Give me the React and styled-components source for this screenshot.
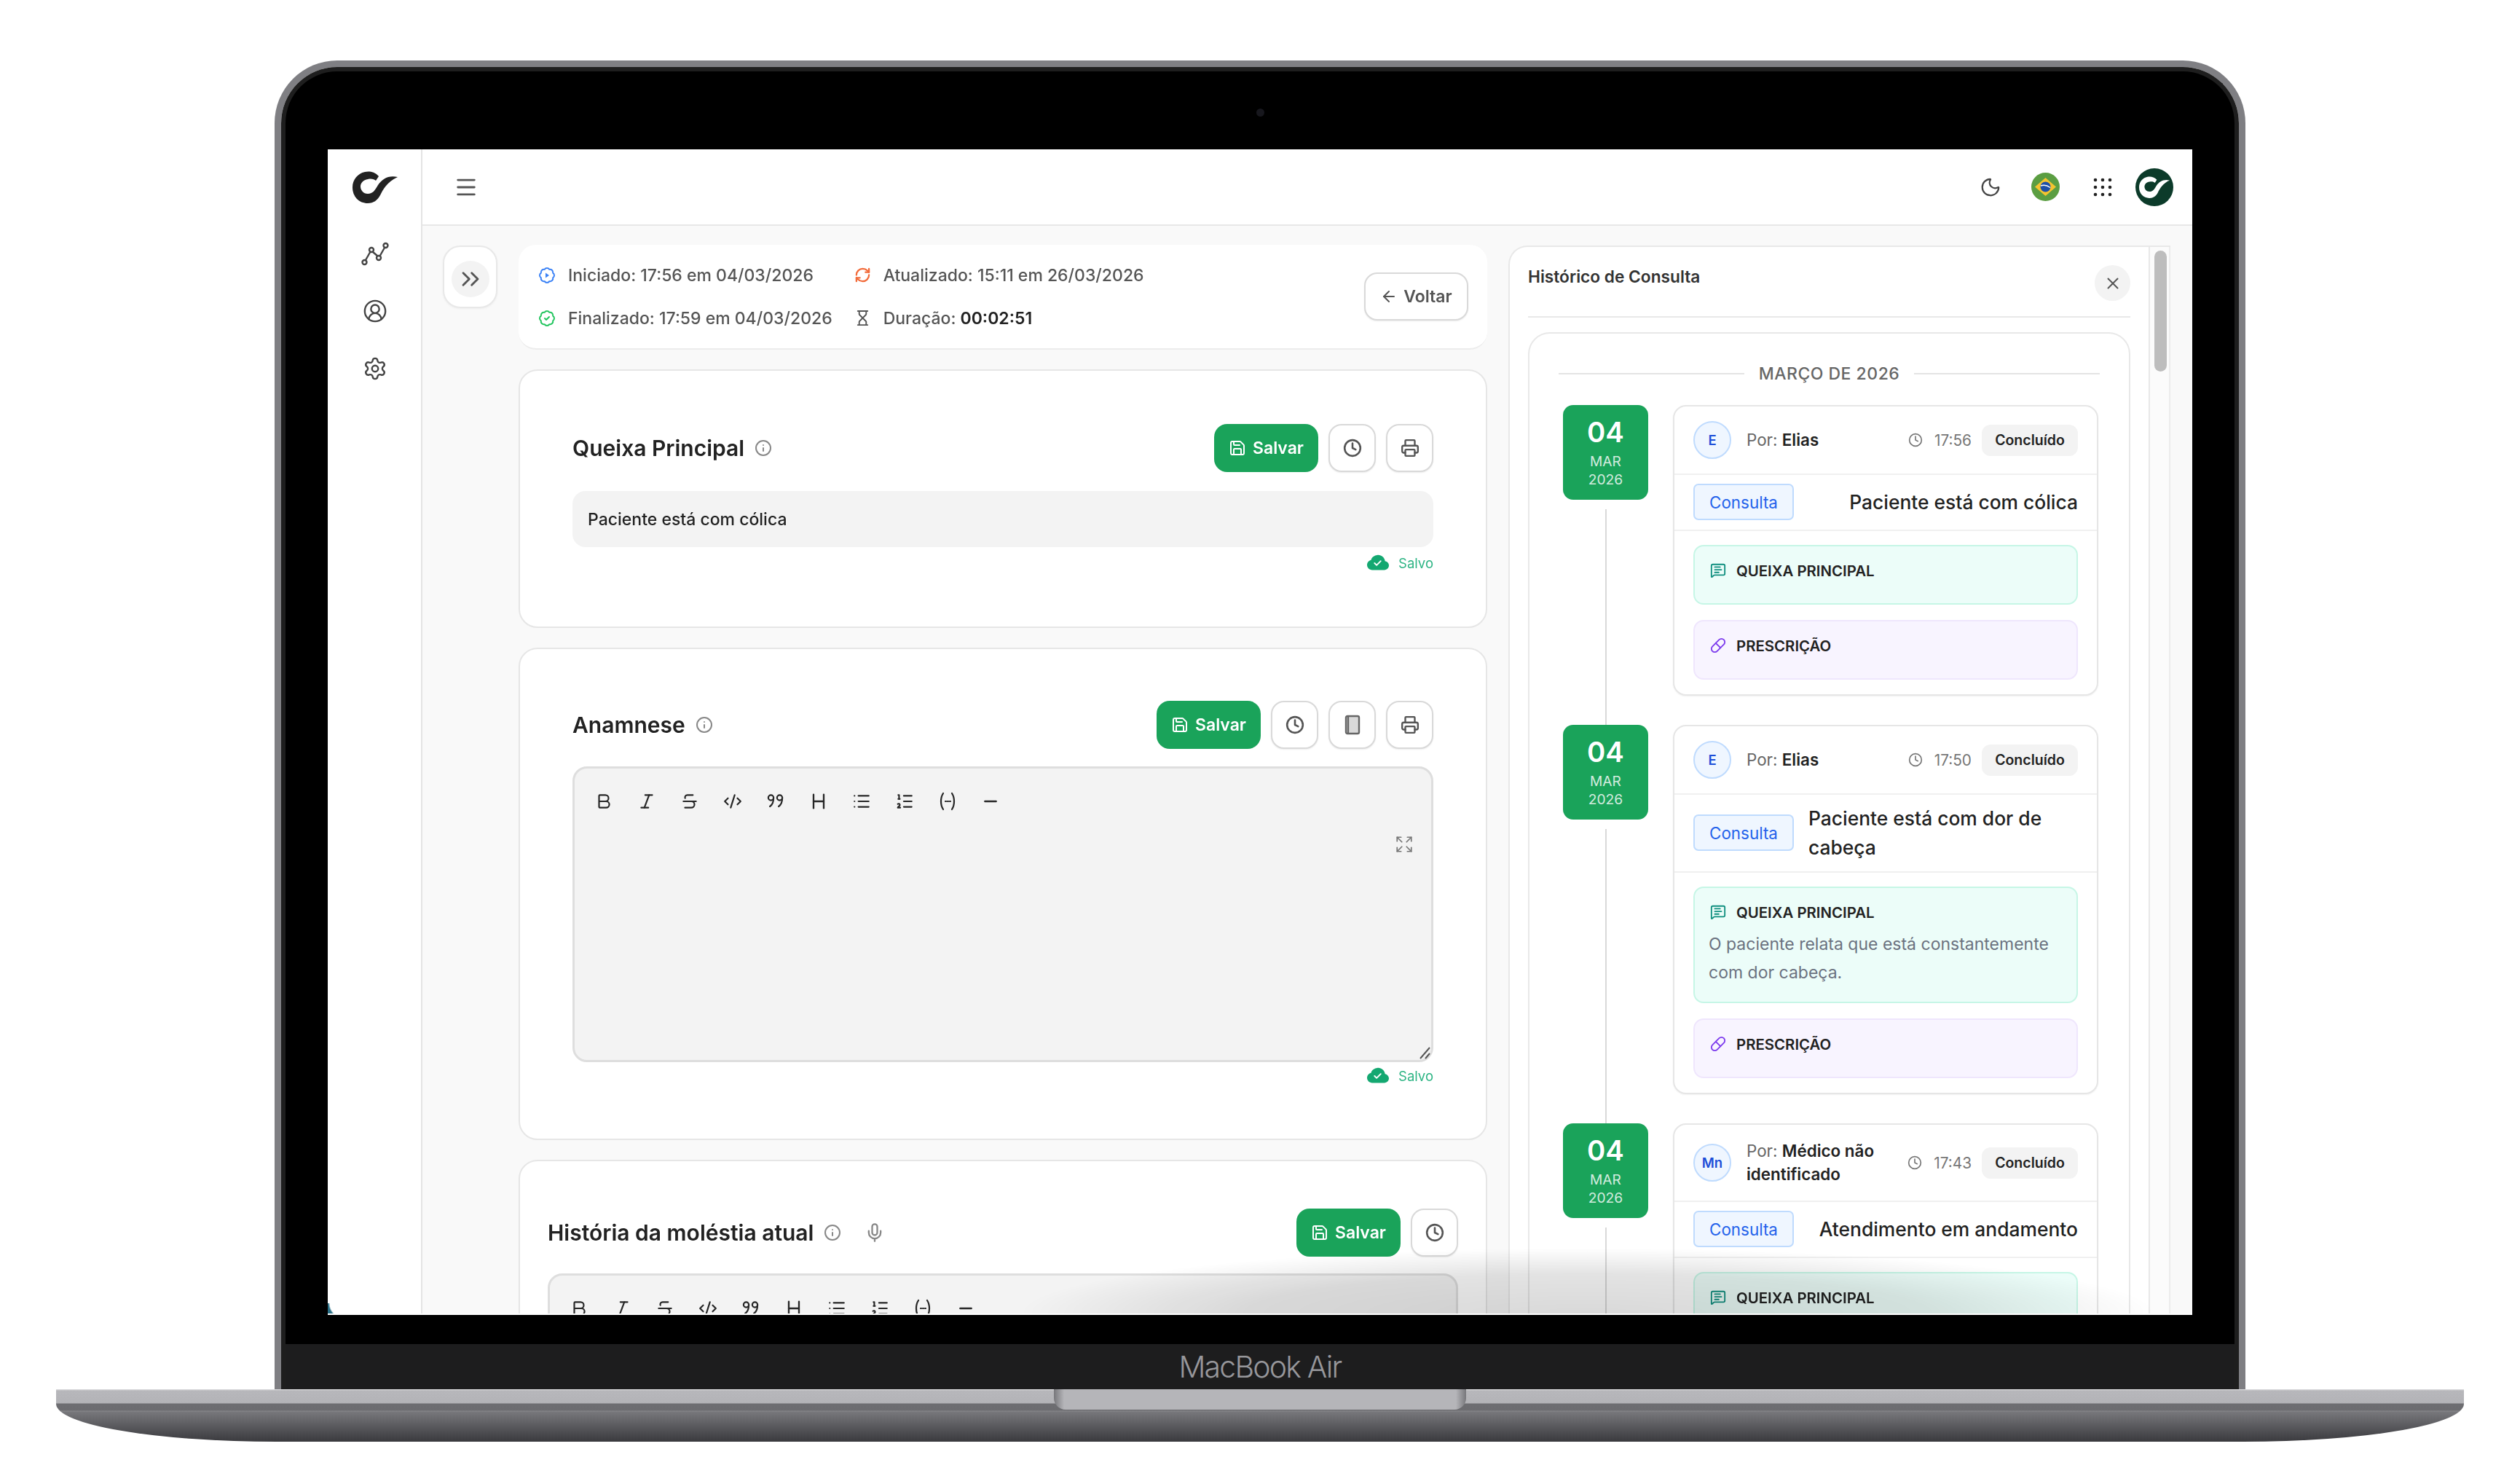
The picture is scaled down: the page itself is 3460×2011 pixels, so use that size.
import React from "react"
import styled, { createGlobalStyle } from "styled-components"
import {
  ArrowLeft, BadgeCheck, Bold, ChevronsRight, CircleUserRound, Clock, CodeXml, Expand,
  Heading, Hourglass, Info, Italic, List, ListOrdered, Menu, MessageSquareText, Mic, Minus, Moon, Pill,
  Printer, RefreshCw, Save, Settings, Strikethrough, X,
} from "lucide-react"
import { BsCloudCheckFill } from "react-icons/bs"

const GlobalStyle = createGlobalStyle`
  html, body { margin: 0; background: #fff; overflow: hidden; height: 2011px; }
  * { box-sizing: border-box; }
  body { font-family: Inter, "Liberation Sans", sans-serif; color: #1f1f1f; }
`

const GREEN = "#1aa35a"

const Stage = styled.div`
  width: 3460px;
  padding-top: 83px;
  display: flex;
  flex-direction: column;
  align-items: center;
`

const Lid = styled.div`
  width: 2706px;
  height: 1824px;
  border: 9px solid #7f7f83;
  border-bottom: 0;
  border-radius: 86px 86px 0 0;
`

const Frame = styled.div`
  height: 100%;
  border: 6px solid #1e1e1e;
  border-bottom: 0;
  border-radius: 77px 77px 0 0;
  background: #000;
  display: flex;
  flex-direction: column;
`

const CameraBar = styled.div`
  height: 107px;
  flex: none;
  padding-top: 5px;
  display: flex;
  align-items: center;
  justify-content: center;
`

const Camera = styled.div`
  width: 11px;
  height: 11px;
  border-radius: 50%;
  background: #17171d;
`

const ScreenWrap = styled.div`
  flex: none;
  padding: 0 58px;
`

const Screen = styled.div`
  position: relative;
  width: 2560px;
  height: 1600px;
  overflow: hidden;
  background: #f9f9f9;
  border-bottom: 2px solid #fff;
  display: flex;
`

const Soft = styled.div`
  flex: 1;
  min-width: 0;
  display: flex;
  filter: blur(0.7px);
`

const BottomShade = styled.div`
  position: absolute;
  right: 50px;
  bottom: 0;
  width: 1560px;
  height: 90px;
  background: radial-gradient(
    ellipse 50% 100% at 50% 100%,
    rgba(0, 0, 0, 0.15) 0, rgba(0, 0, 0, 0.11) 60%, rgba(0, 0, 0, 0) 100%
  );
`

const CornerSliver = styled.div`
  position: absolute;
  left: 0;
  bottom: 0;
  width: 22px;
  height: 14px;
  background: radial-gradient(circle at 100% 0, rgba(42, 111, 134, 0) 19px, #2a6f86 21px);
`

const Chin = styled.div`
  margin-top: 40px;
  flex: 1;
  background: #1d1d1e;
  display: flex;
  align-items: center;
  justify-content: center;
`

const ChinLabel = styled.div`
  font-family: Inter, "Liberation Sans", sans-serif;
  font-size: 41px;
  font-weight: 300;
  letter-spacing: -1.8px;
  color: #97979b;
`

const Base = styled.div`
  width: 3306px;
  height: 72px;
  border-radius: 0 0 303px 303px / 0 0 52px 52px;
  background: linear-gradient(
    #e4e4e6 0, #b7b7bb 2px, #b3b3b7 19px, #6d6d71 20px, #6c6c70 29px, #8a8a8e 30px, #77777b 31px, #3a3a3e 100%
  );
  display: flex;
  justify-content: center;
`

const Hinge = styled.div`
  width: 566px;
  height: 28px;
  border-radius: 0 0 16px 16px;
  background: linear-gradient(90deg, #77777b 0, #b5b5b9 14px, #b5b5b9 calc(100% - 14px), #77777b 100%);
`

const Sidebar = styled.aside`
  width: 130px;
  flex: none;
  background: #fff;
  border-right: 2px solid #e4e4e4;
  display: flex;
  flex-direction: column;
  align-items: center;
  padding: 30px 0 0 2px;
`

const LogoMark = styled.svg`
  width: ${p => p.$w}px;
  height: ${p => Math.round((p.$w * 44) / 62)}px;
  fill: ${p => p.$fill};
  flex: none;
`

const NavList = styled.nav`
  margin-top: 53px;
  display: flex;
  flex-direction: column;
  align-items: center;
  gap: 45px;
  color: #444;
`

const Main = styled.div`
  flex: 1;
  min-width: 0;
  display: flex;
  flex-direction: column;
`

const TopBar = styled.header`
  height: 105px;
  flex: none;
  background: #fff;
  border-bottom: 2px solid #e8e8e8;
  padding: 0 26px 0 43px;
  display: flex;
  align-items: center;
  color: #555;
`

const TopRight = styled.div`
  margin-left: auto;
  display: flex;
  align-items: center;
`

const TopItem = styled.div`
  display: flex;
  margin-left: ${p => p.$gap}px;
  color: ${p => p.$color || "#444"};
`

const AvatarLogo = styled.div`
  width: 52px;
  height: 52px;
  border-radius: 50%;
  background: #0c3b2a;
  display: flex;
  align-items: center;
  justify-content: center;
`

const Content = styled.div`
  flex: 1;
  min-height: 0;
  overflow: hidden;
  padding: 26px 30px 0 28px;
  display: flex;
  align-items: flex-start;
`

const ToggleCard = styled.div`
  width: 75px;
  height: 86px;
  flex: none;
  margin-top: 1px;
  margin-right: 29px;
  padding-top: 5px;
  background: #fff;
  border: 2px solid #e8e8e8;
  border-radius: 24px;
  box-shadow: 0 1px 3px rgba(0, 0, 0, 0.05);
  display: flex;
  align-items: center;
  justify-content: center;
`

const ToggleInner = styled.div`
  width: 52px;
  height: 50px;
  border-radius: 50%;
  background: #f3f3f3;
  color: #555;
  display: flex;
  align-items: center;
  justify-content: center;
`

const FormColumn = styled.div`
  width: 1330px;
  flex: none;
  display: flex;
  flex-direction: column;
  gap: 27px;
`

const InfoCard = styled.div`
  height: 144px;
  background: #fff;
  border-radius: 24px;
  border-bottom: 2px solid #ececec;
  padding: 0 26px 0 27px;
  display: flex;
  align-items: center;
  justify-content: space-between;
`

const InfoGrid = styled.div`
  display: grid;
  grid-template-columns: auto auto;
  column-gap: 30px;
  row-gap: 29px;
`

const InfoItem = styled.div`
  height: 30px;
  display: flex;
  align-items: center;
  gap: 17px;
  font-size: 23px;
  font-weight: 500;
  color: #555;
  white-space: nowrap;

  b { font-weight: 600; color: #222; }
`

const Outline = styled.button`
  height: 66px;
  width: ${p => p.$w || 65}px;
  background: #fff;
  border: 2px solid #d9d9d9;
  border-radius: 18px;
  box-shadow: 0 1px 2px rgba(0, 0, 0, 0.08);
  color: #555;
  padding: 0;
  display: flex;
  align-items: center;
  justify-content: center;
  gap: 8px;
  font: 600 23px Inter, sans-serif;
`

const SectionCard = styled.section`
  background: #fff;
  border: 2px solid #e6e6e6;
  border-radius: 26px;
  padding: ${p => p.$pad};
`

const SectionHead = styled.div`
  display: flex;
  align-items: center;
  justify-content: space-between;
  margin-bottom: ${p => p.$mb}px;
`

const SectionTitle = styled.h2`
  margin: 0;
  display: flex;
  align-items: center;
  gap: 14px;
  font-size: 30px;
  font-weight: 600;
  color: #222;
`

const TitleIcon = styled.span`
  display: flex;
  color: #888;
  margin-left: ${p => p.$ml || 0}px;
`

const Actions = styled.div`
  display: flex;
  gap: 14px;
`

const SaveButton = styled.button`
  height: 66px;
  padding: 0 20px;
  background: ${GREEN};
  border: 0;
  border-radius: 18px;
  color: #fff;
  display: flex;
  align-items: center;
  gap: 9px;
  font: 600 23px Inter, sans-serif;
`

const PlainInput = styled.div`
  height: 77px;
  background: #f3f3f3;
  border-radius: 18px;
  padding: 0 21px;
  display: flex;
  align-items: center;
  font-size: 23px;
  font-weight: 500;
  color: #222;
`

const Saved = styled.div`
  margin-top: ${p => p.$mt}px;
  height: 26px;
  display: flex;
  align-items: center;
  justify-content: flex-end;
  gap: 13px;
  font-size: 18.5px;
  color: #2fb585;

  svg { color: #14a871; }
`

const Editor = styled.div`
  position: relative;
  height: 406px;
  background: #f3f3f3;
  border: 3px solid #dedede;
  border-radius: 20px;
  padding: 31px 24px 0 26px;
  display: flex;
  flex-direction: column;
`

const Toolbar = styled.div`
  display: flex;
  gap: 31px;
  color: #262626;
`

const ToolIcon = styled.span`
  width: 28px;
  height: 28px;
  display: flex;
  align-items: center;
  justify-content: center;
`

const FullIcon = styled.span`
  margin-top: 32px;
  align-self: flex-end;
  display: flex;
  color: #777;
`

const Grabber = styled.svg`
  position: absolute;
  right: 1px;
  bottom: 1px;
  width: 16px;
  height: 18px;
  stroke: #555;
  stroke-width: 2;
`

const HistoryPanel = styled.div`
  width: 909px;
  flex: none;
  height: 1600px;
  margin-left: 29px;
  margin-top: 1px;
  display: flex;
  background: #fff;
  border-top: 2px solid #e8e8e8;
  border-left: 2px solid #e8e8e8;
  border-radius: 26px 0 0 0;
`

const PanelBody = styled.div`
  width: 877px;
  flex: none;
  padding: 25px 25px 0 25px;
`

const PanelHead = styled.div`
  display: flex;
  align-items: flex-start;
  justify-content: space-between;
  padding-bottom: 21px;
  margin-bottom: 20px;
  border-bottom: 2px solid #e8e8e8;
`

const PanelTitle = styled.div`
  font-size: 22.7px;
  font-weight: 600;
  line-height: 32px;
  color: #333;
`

const CloseButton = styled.div`
  width: 49px;
  height: 49px;
  border-radius: 50%;
  background: #f3f3f3;
  color: #555;
  display: flex;
  align-items: center;
  justify-content: center;
`

const Gutter = styled.div`
  flex: 1;
  background: #fbfbfb;
  border-left: 2px solid #e8e8e8;
  border-right: 2px solid #ececec;
  padding: 5px 3px 0 6px;
`

const ScrollThumb = styled.div`
  height: 166px;
  border-radius: 9px;
  background: #bdbdbd;
`

const TimelineCard = styled.div`
  background: #fff;
  border: 2px solid #e8e8e8;
  border-radius: 30px;
  padding: 40px 40px 0;
`

const MonthHeading = styled.div`
  height: 30px;
  display: flex;
  align-items: center;
  gap: 20px;
  font-size: 23px;
  font-weight: 500;
  letter-spacing: 0.5px;
  color: #666;
  white-space: nowrap;
  margin-bottom: 28px;

  &::before, &::after {
    content: "";
    flex: 1;
    height: 2px;
    background: #e4e4e4;
  }
`

const TimelineList = styled.div`
  padding-left: 6px;
  display: flex;
  flex-direction: column;
  gap: 40px;
`

const TimelineRow = styled.div`
  display: flex;
  gap: 34px;
`

const DateColumn = styled.div`
  width: 117px;
  flex: none;
  display: flex;
  flex-direction: column;
  align-items: center;
`

const DateBadge = styled.div`
  width: 117px;
  height: 130px;
  flex: none;
  border-radius: 14px;
  background: ${GREEN};
  color: #fff;
  display: flex;
  flex-direction: column;
  align-items: center;
  justify-content: center;
`

const DateDay = styled.div`
  font-size: 38.4px;
  font-weight: 600;
  line-height: 44px;
  margin-bottom: 6px;
`

const DateSmall = styled.div`
  font-size: 19.2px;
  line-height: 25px;
  opacity: 0.8;
`

const Connector = styled.div`
  flex: 1;
  width: 2px;
  margin: 13px 0 -40px;
  background: #d9d9d9;
`

const EntryCard = styled.article`
  width: 584px;
  flex: none;
  background: #fff;
  border: 2px solid #e6e6e6;
  border-radius: 18px;
  box-shadow: 0 1px 2px rgba(0, 0, 0, 0.06);
`

const EntryHead = styled.div`
  padding: 20px 26px;
  border-bottom: 2px solid #f0f0f0;
  display: flex;
  align-items: center;
`

const Avatar = styled.div`
  width: 52px;
  height: 52px;
  flex: none;
  border-radius: 50%;
  background: #eff6ff;
  border: 2px solid #bfdbfe;
  color: #1d4ed8;
  font-size: 18.5px;
  font-weight: 600;
  display: flex;
  align-items: center;
  justify-content: center;
`

const Author = styled.div`
  margin-left: 21px;
  flex: 1;
  font-size: 22.4px;
  line-height: 32px;
  color: #666;

  b { font-weight: 600; color: #222; }
`

const TimeLabel = styled.div`
  display: flex;
  align-items: center;
  gap: 16px;
  margin-left: 17px;
  font-size: 20.8px;
  color: #777;
  white-space: nowrap;
`

const StatusPill = styled.div`
  margin-left: 14px;
  width: 132px;
  height: 43px;
  flex: none;
  border-radius: 12px;
  background: #f3f3f3;
  display: flex;
  align-items: center;
  justify-content: center;
  font-size: 19.5px;
  font-weight: 600;
  color: #222;
`

const EntryType = styled.div`
  padding: 12px 26px 13px;
  border-bottom: 2px solid #f0f0f0;
  display: flex;
  align-items: center;
  justify-content: space-between;
  gap: 20px;
`

const TypeTag = styled.div`
  width: 138px;
  height: 50px;
  flex: none;
  border: 2px solid #bfdbfe;
  border-radius: 7px;
  background: #eff6ff;
  color: #2563eb;
  font-size: 22.4px;
  display: flex;
  align-items: center;
  justify-content: center;
`

const EntryTitle = styled.div`
  font-size: 26.4px;
  font-weight: 500;
  line-height: 40px;
  color: #222;
`

const EntryBody = styled.div`
  padding: 19px 26px 20px;
  display: flex;
  flex-direction: column;
  gap: 21px;
`

const NoteBox = styled.div`
  border: 2px solid ${p => p.$border};
  background: ${p => p.$bg};
  border-radius: 14px;
  padding: 18px 19px 20px;
`

const NoteLabel = styled.div`
  height: 30px;
  margin-bottom: 10px;
  display: flex;
  align-items: center;
  gap: 14px;
  padding-left: 2px;
  font-size: 20.4px;
  font-weight: 600;
  color: #222;

  svg { color: ${p => p.$icon}; }
`

const NoteText = styled.div`
  font-size: 23px;
  line-height: 39px;
  color: #6b7280;
`

const ChartIcon = () => (
  <svg width="38" height="33" viewBox="0 0 38 33" fill="none" stroke="currentColor" strokeWidth="2.4">
    <circle cx="4.5" cy="28" r="3" />
    <circle cx="14" cy="11" r="3" />
    <circle cx="24" cy="22" r="3" />
    <circle cx="33.5" cy="5" r="3" />
    <path d="M6 25l6.5-11.5M15.5 13.5l7 6M25.5 19.5l6.5-11.5" />
  </svg>
)

const Logo = ({ w, fill }) => (
  <LogoMark $w={w} $fill={fill} viewBox="0 0 62 44">
    <path d="M36 7C30 0 22 0 17 1 7 3 0 12 0 22c0 13 9 22 21 22 8 0 13-4 17-11 4-8 9-18 24-25-12-3-21 2-27 11-4 7-7 12-14 12-6 0-10-5-10-10s4-9 10-10c5-1 9 0 11 2Z" />
  </LogoMark>
)

const Flag = () => (
  <svg width="39" height="39" viewBox="0 0 39 39">
    <circle cx="19.5" cy="19.5" r="19.5" fill="#5b9e42" />
    <path d="M19.5 7L34 19.5 19.5 32 5 19.5Z" fill="#f4c430" />
    <circle cx="19.5" cy="19.5" r="7" fill="#1d4fa8" />
    <path d="M13 18c4-1.5 9-.5 13 2.5" fill="none" stroke="#fff" strokeWidth="1.5" />
  </svg>
)

const DotGrid = () => (
  <svg width="26" height="26" viewBox="0 0 26 26" fill="currentColor">
    {[3, 13, 23].flatMap(y => [3, 13, 23].map(x => <circle key={`${x}-${y}`} cx={x} cy={y} r="2.3" />))}
  </svg>
)

const StartIcon = () => (
  <svg width="24" height="24" viewBox="0 0 24 24" fill="none" stroke="#3b82f6" strokeWidth="2">
    <path d="M3.85 8.62a4 4 0 0 1 4.78-4.77 4 4 0 0 1 6.74 0 4 4 0 0 1 4.78 4.78 4 4 0 0 1 0 6.74 4 4 0 0 1-4.77 4.78 4 4 0 0 1-6.75 0 4 4 0 0 1-4.78-4.77 4 4 0 0 1 0-6.76Z" />
    <path d="M10 8.5l5 3.5-5 3.5Z" fill="#3b82f6" stroke="none" />
  </svg>
)

const BookIcon = () => (
  <svg width="24" height="28" viewBox="0 0 24 28" fill="none">
    <rect x="3" y="2" width="18" height="24" rx="2" fill="#d9d9d9" stroke="#666" strokeWidth="2.4" />
    <path d="M6 2v24" stroke="#666" strokeWidth="2.4" />
  </svg>
)

const QuoteIcon = () => (
  <svg width="28" height="28" viewBox="0 0 28 28" fill="none" stroke="currentColor" strokeWidth="2.2" strokeLinecap="round">
    <circle cx="7.5" cy="9" r="3.6" />
    <path d="M11.1 9c0 6-2 10-5 12" />
    <circle cx="19.5" cy="9" r="3.6" />
    <path d="M23.1 9c0 6-2 10-5 12" />
  </svg>
)

const VariableIcon = () => (
  <svg width="28" height="28" viewBox="0 0 28 28" fill="none" stroke="currentColor" strokeWidth="2.2" strokeLinecap="round">
    <path d="M8 3c-4 6-4 16 0 22M20 3c4 6 4 16 0 22" />
    <path d="M11 14h1M14 14h1M17 14h1" />
  </svg>
)

const EditorTools = () => (
  <Toolbar>
    <ToolIcon><Bold size={26} strokeWidth={2} /></ToolIcon>
    <ToolIcon><Italic size={26} strokeWidth={2} /></ToolIcon>
    <ToolIcon><Strikethrough size={26} strokeWidth={2} /></ToolIcon>
    <ToolIcon><CodeXml size={26} strokeWidth={2} /></ToolIcon>
    <ToolIcon><QuoteIcon /></ToolIcon>
    <ToolIcon><Heading size={30} strokeWidth={2} /></ToolIcon>
    <ToolIcon><List size={26} strokeWidth={2} /></ToolIcon>
    <ToolIcon><ListOrdered size={26} strokeWidth={2} /></ToolIcon>
    <ToolIcon><VariableIcon /></ToolIcon>
    <ToolIcon><Minus size={26} strokeWidth={2.4} /></ToolIcon>
  </Toolbar>
)

const SectionEditor = () => (
  <Editor>
    <EditorTools />
    <FullIcon><Expand size={26} strokeWidth={1.6} /></FullIcon>
    <Grabber viewBox="0 0 16 18"><path d="M2 17L15 2M9 17l6-7" /></Grabber>
  </Editor>
)

const SaveBtn = () => (
  <SaveButton><Save size={24} strokeWidth={2} />Salvar</SaveButton>
)

const SavedNote = ({ mt }) => (
  <Saved $mt={mt}><BsCloudCheckFill size={30} />Salvo</Saved>
)

const ClockBtn = () => (
  <Outline><Clock size={26} strokeWidth={2.4} /></Outline>
)

const PrintBtn = () => (
  <Outline><Printer size={26} strokeWidth={2.2} /></Outline>
)

const ENTRIES = [
  {
    initials: "E", author: "Elias", time: "17:56", title: "Paciente está com cólica",
    note: null,
  },
  {
    initials: "E", author: "Elias", time: "17:50", title: "Paciente está com dor de cabeça",
    note: "O paciente relata que está constantemente com dor cabeça.",
  },
  {
    initials: "Mn", author: "Médico não identificado", time: "17:43", title: "Atendimento em andamento",
    note: null,
  },
]

const Entry = ({ entry }) => (
  <TimelineRow>
    <DateColumn>
      <DateBadge>
        <DateDay>04</DateDay>
        <DateSmall>MAR</DateSmall>
        <DateSmall>2026</DateSmall>
      </DateBadge>
      <Connector />
    </DateColumn>
    <EntryCard>
      <EntryHead>
        <Avatar>{entry.initials}</Avatar>
        <Author>Por: <b>{entry.author}</b></Author>
        <TimeLabel><Clock size={20} strokeWidth={2} />{entry.time}</TimeLabel>
        <StatusPill>Concluído</StatusPill>
      </EntryHead>
      <EntryType>
        <TypeTag>Consulta</TypeTag>
        <EntryTitle>{entry.title}</EntryTitle>
      </EntryType>
      <EntryBody>
        <NoteBox $bg="#ecfdf9" $border="#c6f6e6">
          <NoteLabel $icon="#0f8f7f"><MessageSquareText size={22} strokeWidth={2} />QUEIXA PRINCIPAL</NoteLabel>
          {entry.note && <NoteText>{entry.note}</NoteText>}
        </NoteBox>
        <NoteBox $bg="#f8f4ff" $border="#efe6fd">
          <NoteLabel $icon="#7c3aed"><Pill size={22} strokeWidth={2} />PRESCRIÇÃO</NoteLabel>
        </NoteBox>
      </EntryBody>
    </EntryCard>
  </TimelineRow>
)

const App = () => (
  <>
    <GlobalStyle />
    <Stage>
      <Lid>
        <Frame>
          <CameraBar><Camera /></CameraBar>
          <ScreenWrap>
            <Screen>
              <Soft>
                <Sidebar>
                  <Logo w={62} fill="#222" />
                  <NavList>
                    <ChartIcon />
                    <CircleUserRound size={34} strokeWidth={1.7} />
                    <Settings size={34} strokeWidth={1.7} />
                  </NavList>
                </Sidebar>
                <Main>
                  <TopBar>
                    <Menu size={34} strokeWidth={2} />
                    <TopRight>
                      <TopItem $gap={0}><Moon size={30} strokeWidth={1.8} /></TopItem>
                      <TopItem $gap={41}><Flag /></TopItem>
                      <TopItem $gap={46} $color="#222"><DotGrid /></TopItem>
                      <TopItem $gap={32}>
                        <AvatarLogo><Logo w={42} fill="#fff" /></AvatarLogo>
                      </TopItem>
                    </TopRight>
                  </TopBar>
                  <Content>
                    <ToggleCard>
                      <ToggleInner><ChevronsRight size={40} strokeWidth={1.7} /></ToggleInner>
                    </ToggleCard>
                    <FormColumn>
                      <InfoCard>
                        <InfoGrid>
                          <InfoItem><StartIcon />Iniciado: 17:56 em 04/03/2026</InfoItem>
                          <InfoItem><RefreshCw size={23} color="#f26b3a" strokeWidth={2.4} />Atualizado: 15:11 em 26/03/2026</InfoItem>
                          <InfoItem><BadgeCheck size={24} color="#22c55e" strokeWidth={2} />Finalizado: 17:59 em 04/03/2026</InfoItem>
                          <InfoItem><Hourglass size={23} color="#555" strokeWidth={2} /><span>Duração: <b>00:02:51</b></span></InfoItem>
                        </InfoGrid>
                        <Outline $w={143}><ArrowLeft size={24} strokeWidth={2} />Voltar</Outline>
                      </InfoCard>

                      <SectionCard $pad="73px 72px 74px">
                        <SectionHead $mb={26}>
                          <SectionTitle>Queixa Principal<TitleIcon><Info size={24} strokeWidth={2} /></TitleIcon></SectionTitle>
                          <Actions><SaveBtn /><ClockBtn /><PrintBtn /></Actions>
                        </SectionHead>
                        <PlainInput>Paciente está com cólica</PlainInput>
                        <SavedNote mt={9} />
                      </SectionCard>

                      <SectionCard $pad="71px 72px 73px">
                        <SectionHead $mb={24}>
                          <SectionTitle>Anamnese<TitleIcon><Info size={24} strokeWidth={2} /></TitleIcon></SectionTitle>
                          <Actions>
                            <SaveBtn />
                            <ClockBtn />
                            <Outline><BookIcon /></Outline>
                            <PrintBtn />
                          </Actions>
                        </SectionHead>
                        <SectionEditor />
                        <SavedNote mt={6} />
                      </SectionCard>

                      <SectionCard $pad="65px 38px 74px">
                        <SectionHead $mb={23}>
                          <SectionTitle>
                            História da moléstia atual
                            <TitleIcon><Info size={24} strokeWidth={2} /></TitleIcon>
                            <TitleIcon $ml={18}><Mic size={28} strokeWidth={2} /></TitleIcon>
                          </SectionTitle>
                          <Actions><SaveBtn /><ClockBtn /></Actions>
                        </SectionHead>
                        <SectionEditor />
                      </SectionCard>
                    </FormColumn>

                    <HistoryPanel>
                      <PanelBody>
                        <PanelHead>
                          <PanelTitle>Histórico de Consulta</PanelTitle>
                          <CloseButton><X size={26} strokeWidth={1.8} /></CloseButton>
                        </PanelHead>
                        <TimelineCard>
                          <MonthHeading>MARÇO DE 2026</MonthHeading>
                          <TimelineList>
                            {ENTRIES.map(entry => (
                              <Entry key={entry.time} entry={entry} />
                            ))}
                          </TimelineList>
                        </TimelineCard>
                      </PanelBody>
                      <Gutter><ScrollThumb /></Gutter>
                    </HistoryPanel>
                  </Content>
                </Main>
              </Soft>
              <BottomShade />
              <CornerSliver />
            </Screen>
          </ScreenWrap>
          <Chin><ChinLabel>MacBook Air</ChinLabel></Chin>
        </Frame>
      </Lid>
      <Base><Hinge /></Base>
    </Stage>
  </>
)

export default App
